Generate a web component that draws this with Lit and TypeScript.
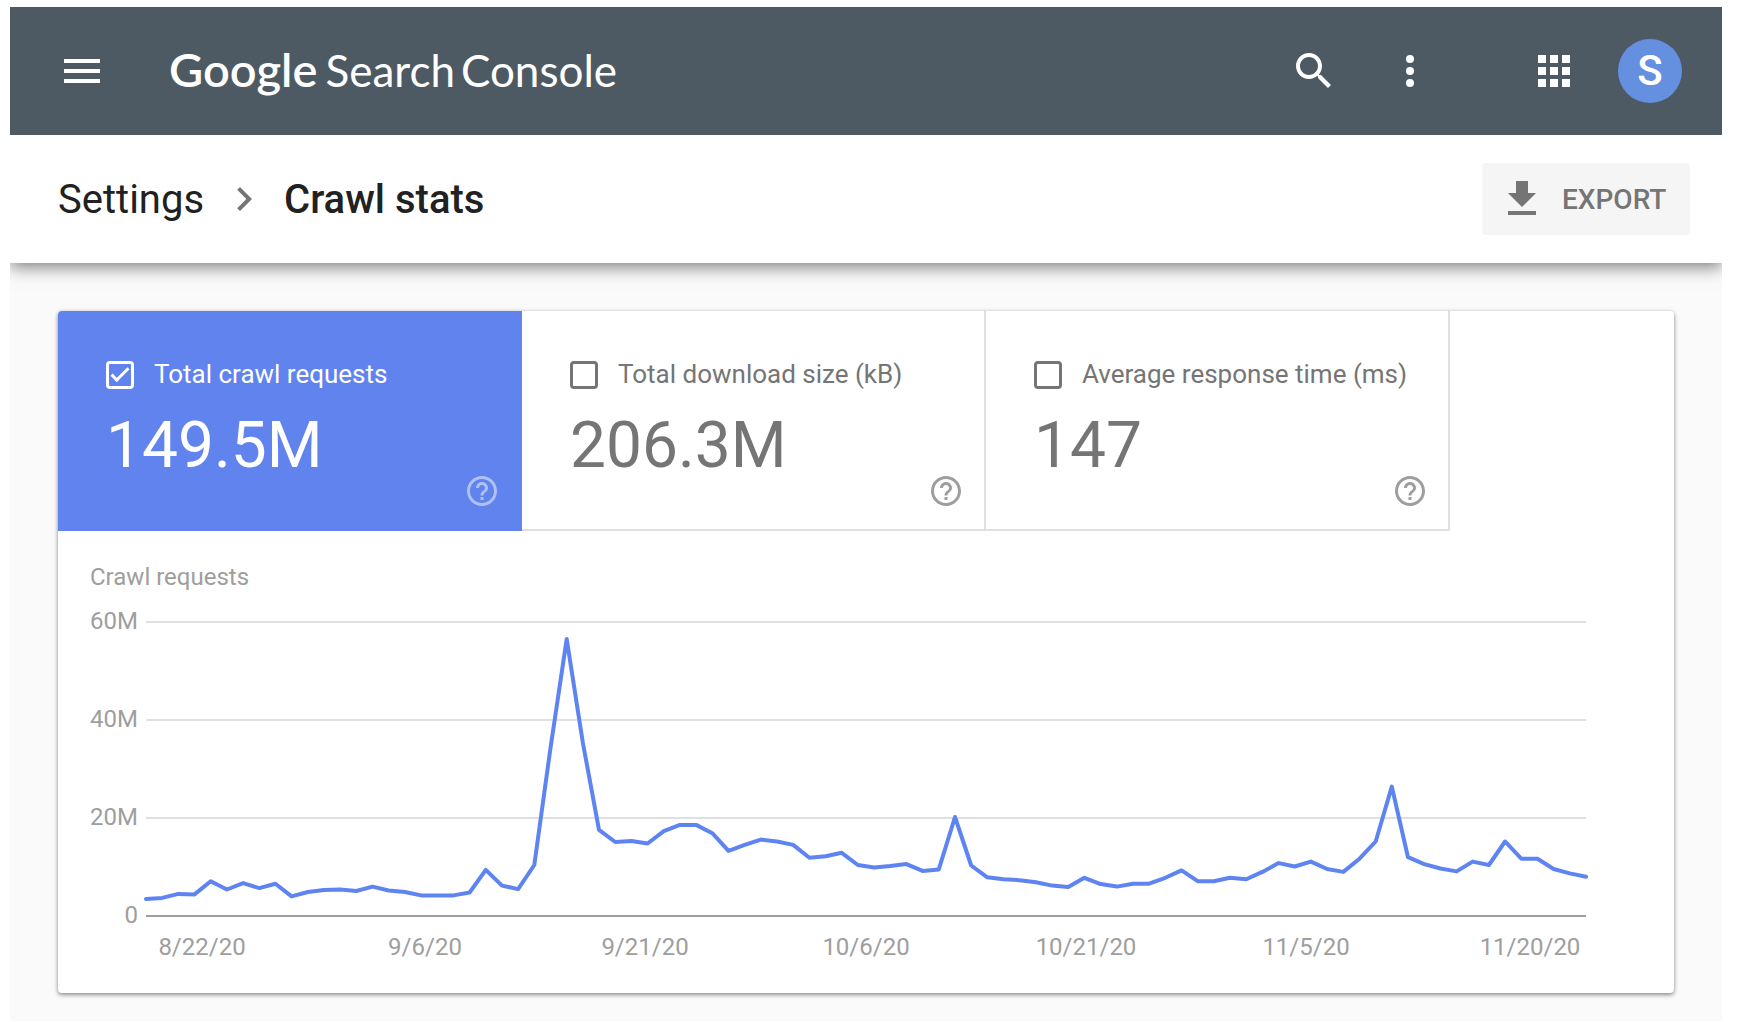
import { LitElement, html, css, svg } from "lit";
import { customElement, property } from "lit/decorators.js";
import { classMap } from "lit/directives/class-map.js";

interface Metric {
  id: string;
  label: string;
  value: string;
  checked: boolean;
}

const METRICS: Metric[] = [
  { id: "requests", label: "Total crawl requests", value: "149.5M", checked: true },
  { id: "size", label: "Total download size (kB)", value: "206.3M", checked: false },
  { id: "time", label: "Average response time (ms)", value: "147", checked: false },
];

/* Daily crawl requests, in millions. */
const REQUESTS: number[] = [
  3.5, 3.7, 4.5, 4.4, 7.1, 5.4, 6.7, 5.7, 6.6, 4.0, 4.9, 5.3, 5.4, 5.1, 6.0,
  5.2, 4.9, 4.2, 4.2, 4.2, 4.8, 9.4, 6.2, 5.5, 10.4, 34.3, 56.5, 35.3, 17.6, 15.1,
  15.3, 14.8, 17.3, 18.6, 18.6, 16.9, 13.3, 14.5, 15.6, 15.2, 14.5, 11.9, 12.2, 12.9, 10.4,
  9.9, 10.2, 10.6, 9.2, 9.5, 20.2, 10.3, 7.9, 7.5, 7.3, 6.9, 6.2, 5.9, 7.8, 6.5,
  6.0, 6.6, 6.6, 7.8, 9.3, 7.1, 7.1, 7.8, 7.5, 9.0, 10.8, 10.1, 11.1, 9.6, 9.0,
  11.7, 15.2, 26.4, 12.0, 10.6, 9.7, 9.1, 11.1, 10.4, 15.2, 11.7, 11.7, 9.6, 8.7, 8.0,
];

const DATES = [
  { text: "8/22/20", x: 144 },
  { text: "9/6/20", x: 367 },
  { text: "9/21/20", x: 587 },
  { text: "10/6/20", x: 808 },
  { text: "10/21/20", x: 1028 },
  { text: "11/5/20", x: 1248 },
  { text: "11/20/20", x: 1472 },
];

@customElement("crawl-chart")
export class CrawlChart extends LitElement {
  static styles = css`
    :host { display: block; }
    .chart { display: block; width: 100%; height: auto; }
    .text { fill: #9e9e9e; font-family: Roboto, sans-serif; font-size: 24px; }
    .end { text-anchor: end; }
    .middle { text-anchor: middle; }
    .grid { stroke: #e0e0e0; stroke-width: 2; }
    .axis { stroke: #9e9e9e; stroke-width: 2; }
    .line { fill: none; stroke: #5e84f1; stroke-width: 4; stroke-linejoin: round; stroke-linecap: round; }
  `;

  private readonly left = 88;
  private readonly right = 1528;
  private readonly base = 385;
  private readonly step = 98;

  render() {
    const dx = (this.right - this.left) / (REQUESTS.length - 1);
    const points = REQUESTS.map((v, i) =>
      `${(this.left + i * dx).toFixed(1)},${(this.base - (v / 20) * this.step).toFixed(1)}`).join(" ");
    return html`
      <svg class="chart" viewBox="0 0 1616 462" role="img" aria-label="Crawl requests">
        <text class="text" x="32" y="54">Crawl requests</text>
        ${[60, 40, 20, 0].map((v) => {
          const y = this.base - (v / 20) * this.step;
          return svg`
            <line class=${v ? "grid" : "axis"} x1=${this.left} x2=${this.right} y1=${y} y2=${y}></line>
            <text class="text end" x="80" y=${y + 7}>${v ? `${v}M` : "0"}</text>`;
        })}
        ${DATES.map((d) => svg`<text class="text middle" x=${d.x} y="424">${d.text}</text>`)}
        <polyline class="line" points=${points}></polyline>
      </svg>`;
  }
}

@customElement("metric-tile")
export class MetricTile extends LitElement {
  @property({ attribute: false }) metric!: Metric;

  static styles = css`
    :host { display: block; flex: 0 1 464px; min-width: 0; }
    .tile {
      position: relative; box-sizing: border-box; height: 220px; padding: 46px 22px 0 48px;
      background: #fff; color: #757575;
      border-right: 2px solid #e0e0e0; border-bottom: 2px solid #e0e0e0;
    }
    .selected { background: #6183ee; color: #fff; border-color: #6183ee; border-top-left-radius: 4px; }
    .label { display: flex; align-items: center; gap: 20px; height: 34px; font-size: 26px; white-space: nowrap; }
    .box {
      appearance: none; flex: none; display: grid; place-items: center; box-sizing: border-box;
      width: 28px; height: 28px; margin: 2px 0 0; border: 3px solid currentColor; border-radius: 4px; color: inherit;
    }
    .box:checked::after {
      content: ""; width: 18px; height: 9px; box-sizing: border-box; margin-bottom: 5px;
      border-left: 3px solid currentColor; border-bottom: 3px solid currentColor; transform: rotate(-45deg);
    }
    .value { margin-top: 23px; font-size: 64px; line-height: 64px; }
    .help {
      position: absolute; right: 20px; bottom: 20px; width: 36px; height: 36px; padding: 0;
      border: 0; background: none; color: #9e9e9e;
    }
    .selected .help { color: rgba(255, 255, 255, 0.5); }
    .icon { display: block; width: 36px; height: 36px; fill: currentColor; }
  `;

  render() {
    const m = this.metric;
    return html`
      <div class=${classMap({ tile: true, selected: m.checked })}>
        <label class="label"><input class="box" type="checkbox" .checked=${m.checked}>${m.label}</label>
        <div class="value">${m.value}</div>
        <button class="help" aria-label="Help">
          <svg class="icon" viewBox="0 0 24 24"><path d="M11 18h2v-2h-2v2zm1-16C6.48 2 2 6.48 2 12s4.480 10 10 10 10-4.480 10-10S17.520 2 12 2zm0 18c-4.410 0-8-3.590-8-8s3.590-8 8-8 8 3.590 8 8-3.590 8-8 8zm0-14c-2.210 0-4 1.790-4 4h2c0-1.100.9-2 2-2s2 .9 2 2c0 2-3 1.750-3 5h2c0-2.250 3-2.500 3-5 0-2.210-1.790-4-4-4z"></path></svg>
        </button>
      </div>`;
  }
}

@customElement("app-root")
export class AppRoot extends LitElement {
  static styles = css`
    :host { display: block; padding: 7px 23px 1px 10px; background: #fff; font-family: Roboto, sans-serif; color: #212121; }
    .app { overflow: hidden; background: #fafafa; }
    .icon { display: block; width: 48px; height: 48px; fill: currentColor; }
    .icon-button { padding: 0; border: 0; background: none; color: #fff; }
    .bar { position: relative; z-index: 1; display: flex; align-items: center; height: 128px; padding: 0 40px 0 48px; background: #4d5a63; color: #fff; box-sizing: border-box; }
    .logo { display: flex; align-items: baseline; gap: 8px; margin-left: 63px; padding-bottom: 4px; color: #fff; text-decoration: none; font-family: Lato, sans-serif; font-size: 44px; line-height: 56px; white-space: nowrap; }
    .brand { font-size: 47px; font-weight: 600; }
    .product { display: flex; gap: 6px; }
    .actions { display: flex; align-items: center; gap: 48px; margin-left: auto; }
    .account { display: flex; align-items: center; gap: 40px; margin-left: 48px; }
    .avatar { width: 64px; height: 64px; padding: 0; border: 0; border-radius: 50%; background: #658fdf; color: #fff; font: 500 42px/64px Roboto, sans-serif; }
    .toolbar {
      position: relative; display: flex; align-items: center; justify-content: space-between; box-sizing: border-box;
      height: 128px; padding: 0 32px 0 48px; background: #fff; box-shadow: 0 4px 16px rgba(0, 0, 0, 0.5);
    }
    .crumbs { display: flex; align-items: center; gap: 16px; font-size: 40px; line-height: 48px; }
    .crumb { padding-top: 2px; color: #212121; text-decoration: none; }
    .current { margin: 0; padding-top: 2px; font-size: 40px; font-weight: 500; }
    .chevron { color: #757575; }
    .export {
      display: flex; align-items: center; gap: 16px; min-width: 208px; height: 72px; padding: 0 16px; border: 0; border-radius: 4px;
      background: #f5f5f5; color: #757575; font: 500 28px/32px Roboto, sans-serif;
    }
    .export-text { padding-top: 2px; }
    .content { padding: 48px 48px 28px; }
    .card { border-radius: 4px; background: #fff; box-shadow: 0 2px 4px rgba(0, 0, 0, 0.4), 0 0 4px rgba(0, 0, 0, 0.1); }
    .metrics { display: flex; }
  `;

  render() {
    return html`
      <div class="app">
        <header class="bar">
          <button class="icon-button" aria-label="Main menu">
            <svg class="icon" viewBox="0 0 24 24"><path d="M3 18h18v-2H3v2zm0-5h18v-2H3v2zm0-7v2h18V6H3z"></path></svg>
          </button>
          <a class="logo" href="#"><span class="brand">Google</span><span class="product"><span>Search</span><span>Console</span></span></a>
          <div class="actions">
            <button class="icon-button" aria-label="Search">
              <svg class="icon" viewBox="0 0 24 24"><path d="M15.500 14h-.79l-.28-.27C15.410 12.590 16 11.110 16 9.500 16 5.910 13.090 3 9.500 3S3 5.910 3 9.500 5.910 16 9.500 16c1.610 0 3.090-.59 4.230-1.570l.27.28v.79l5 4.990L20.490 19l-4.990-5zm-6 0C7.010 14 5 11.990 5 9.500S7.010 5 9.500 5 14 7.010 14 9.500 11.990 14 9.500 14z"></path></svg>
            </button>
            <button class="icon-button" aria-label="More options">
              <svg class="icon" viewBox="0 0 24 24"><circle cx="12" cy="6" r="2"></circle><circle cx="12" cy="12" r="2"></circle><circle cx="12" cy="18" r="2"></circle></svg>
            </button>
            <div class="account">
              <button class="icon-button" aria-label="Google apps">
                <svg class="icon" viewBox="0 0 24 24"><path d="M4 8h4V4H4v4zm6 12h4v-4h-4v4zm-6 0h4v-4H4v4zm0-6h4v-4H4v4zm6 0h4v-4h-4v4zm6-10v4h4V4h-4zm-6 4h4V4h-4v4zm6 6h4v-4h-4v4zm0 6h4v-4h-4v4z"></path></svg>
              </button>
              <button class="avatar">S</button>
            </div>
          </div>
        </header>
        <div class="toolbar">
          <nav class="crumbs">
            <a class="crumb" href="#">Settings</a>
            <svg class="icon chevron" viewBox="0 0 24 24"><path d="M10 6L8.590 7.410 13.170 12l-4.580 4.590L10 18l6-6z"></path></svg>
            <h1 class="current">Crawl stats</h1>
          </nav>
          <button class="export">
            <svg class="icon" viewBox="0 0 24 24"><path d="M19 9h-4V3H9v6H5l7 7 7-7zM5 18v2h14v-2H5z"></path></svg>
            <span class="export-text">EXPORT</span>
          </button>
        </div>
        <main class="content">
          <section class="card">
            <div class="metrics">${METRICS.map((m) => html`<metric-tile .metric=${m}></metric-tile>`)}</div>
            <crawl-chart></crawl-chart>
          </section>
        </main>
      </div>`;
  }
}
